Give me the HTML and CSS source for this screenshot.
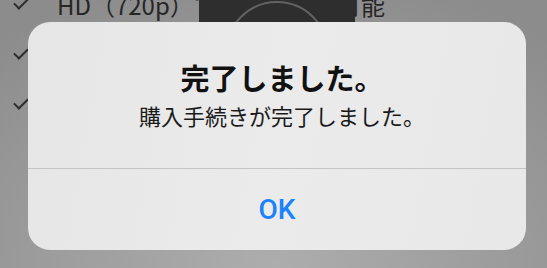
FILE: index.html
```html
<!DOCTYPE html>
<html lang="ja">
<head>
<meta charset="UTF-8">
<meta name="viewport" content="width=device-width, initial-scale=1.0">
<title>完了しました。</title>
<link rel="stylesheet" href="styles.css">
</head>
<body>

<div class="lista">
    <div class="item">
        <span class="check"></span>
        <span class="texto">HD（720p）でストリーム可能</span>
    </div>
    <div class="item">
        <span class="check"></span>
        <span class="texto">字幕</span>
    </div>
    <div class="item">
        <span class="check"></span>
        <span class="texto">吹替</span>
    </div>
</div>

<div class="miniatura">
    <div class="circulo"></div>
</div>

<div class="alerta">
    <div class="alerta-corpo">
        <div class="alerta-titulo">完了しました。</div>
        <div class="alerta-msg">購入手続きが完了しました。</div>
    </div>
    <div class="alerta-botao">OK</div>
</div>

</body>
</html>
```

FILE: styles.css
```css
body {
    margin: 0;
    width: 547px;
    height: 268px;
    overflow: hidden;
    position: relative;
    font-family: "Noto Sans CJK JP", "Noto Sans", sans-serif;
    background: radial-gradient(ellipse 420px 300px at 50% 100%, #adadad 0%, #9c9c9c 55%, #8c8c8c 100%);
}

.lista {
    margin-top: -21px;
}

.item {
    display: flex;
    align-items: center;
    height: 50px;
    padding-left: 14px;
}

.check {
    width: 12px;
    height: 6px;
    border-left: 2px solid #2e2e2e;
    border-bottom: 2px solid #2e2e2e;
    transform: rotate(-45deg);
    margin-top: -4px;
}

.texto {
    margin-left: 29px;
    font-size: 24px;
    color: #262626;
    white-space: nowrap;
}

.miniatura {
    position: absolute;
    left: 199px;
    top: 0;
    width: 156px;
    height: 40px;
    background-color: #2e2e2e;
    overflow: hidden;
}

.circulo {
    position: absolute;
    left: 26px;
    top: 1px;
    width: 100px;
    height: 100px;
    border: 2px solid #626262;
    border-radius: 50%;
}

.alerta {
    position: absolute;
    left: 28px;
    top: 22px;
    width: 498px;
    height: 228px;
    border-radius: 22px;
    background: linear-gradient(100deg, #e6e6e6 0%, #ebebeb 50%, #e8e8e8 100%);
    display: flex;
    flex-direction: column;
    overflow: hidden;
}

.alerta-corpo {
    height: 146px;
    padding-left: 10px;
    border-bottom: 1px solid #c4c4c4;
    text-align: center;
    color: #111;
}

.alerta-titulo {
    margin-top: 40px;
    font-size: 29px;
    line-height: 30px;
    font-weight: bold;
}

.alerta-msg {
    margin-top: 10px;
    font-size: 22px;
    line-height: 26px;
    color: #1a1a1a;
}

.alerta-botao {
    flex: 1;
    display: flex;
    align-items: center;
    justify-content: center;
    font-family: Roboto, "Noto Sans", sans-serif;
    font-size: 28px;
    font-weight: 500;
    color: #1a82fb;
}
```
